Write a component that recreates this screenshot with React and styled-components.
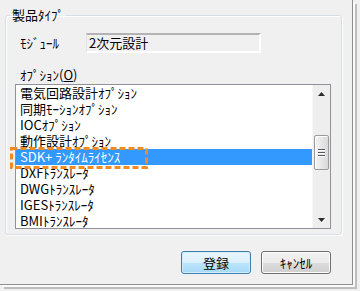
import React from 'react';
import styled, { createGlobalStyle } from 'styled-components';

const GlobalStyle = createGlobalStyle`
  html, body {
    margin: 0;
    padding: 0;
    background: #f0f0f0;
  }
  body {
    font-family: "Noto Sans CJK JP", "Liberation Sans", sans-serif;
    font-size: 13px;
    color: #000000;
  }
`;

const Window = styled.div`
  width: 360px;
  height: 291px;
  background: #f0f0f0;
  overflow: hidden;
  position: relative;
`;

const Client = styled.div`
  width: 353px;
  height: 285px;
  box-sizing: border-box;
  border-right: 1px solid #8f8f8f;
  border-bottom: 1px solid #8f8f8f;
  box-shadow: 2px 2px 0 #fafafa, 4px 4px 0 #bdbdbd;
  padding-top: 7px;
  display: flex;
  flex-direction: column;
`;

const GroupBox = styled.fieldset`
  margin: 0 0 0 5px;
  padding: 0;
  width: 337px;
  height: 228px;
  box-sizing: border-box;
  border: 1px solid #d5dfe5;
  border-radius: 3px;
  box-shadow: inset 1px 1px 0 #ffffff, 1px 1px 0 #ffffff;
  min-width: 0;
`;

const Legend = styled.legend`
  margin-left: 4px;
  padding: 0 2px;
  line-height: 16px;
  font-size: 13px;
`;

const GroupBody = styled.div`
  display: flex;
  flex-direction: column;
  padding: 10px 12px 0 9px;
`;

const FieldRow = styled.div`
  display: flex;
  align-items: center;
  height: 20px;
`;

const Label = styled.div`
  width: ${(p) => p.width || 'auto'};
  margin-left: 5px;
  line-height: 16px;
  margin-top: ${(p) => p.mt || '0'};
  margin-bottom: ${(p) => p.mb || '0'};
`;

const Underline = styled.span`
  text-decoration: underline;
`;

const ReadOnlyBox = styled.div`
  width: 175px;
  height: 20px;
  box-sizing: border-box;
  border-top: 2px solid #b3b3b3;
  border-left: 1px solid #e3e3e3;
  border-right: 2px solid #ffffff;
  border-bottom: 2px solid #ffffff;
  padding-left: 2px;
  line-height: 16px;
  background: #f0f0f0;
`;

const ListBox = styled.div`
  width: 316px;
  height: 145px;
  box-sizing: border-box;
  border: 1px solid #8f9399;
  background: #ffffff;
  display: flex;
  position: relative;
`;

const Items = styled.div`
  flex: 1;
  overflow: hidden;
  display: flex;
  flex-direction: column;
`;

const Item = styled.div`
  height: 16px;
  flex: none;
  line-height: 16px;
  padding-left: 4px;
  white-space: nowrap;
  background: ${(p) => (p.selected ? '#3399ff' : 'transparent')};
  color: ${(p) => (p.selected ? '#ffffff' : '#000000')};
`;

const ScrollBar = styled.div`
  width: 17px;
  flex: none;
  background: #eeeeee;
  border-left: 1px solid #f8f8f8;
  display: flex;
  flex-direction: column;
`;

const ArrowButton = styled.div`
  height: 17px;
  flex: none;
  display: flex;
  align-items: center;
  justify-content: center;
`;

const Track = styled.div`
  flex: 1;
  display: flex;
  flex-direction: column;
`;

const Thumb = styled.div`
  margin-top: ${(p) => p.offset}px;
  height: 35px;
  margin-left: 1px;
  width: 15px;
  box-sizing: border-box;
  border: 1px solid #9b9b9b;
  border-radius: 2px;
  background: linear-gradient(to right, #f4f4f4, #e6e6e6 55%, #d9d9d9);
  box-shadow: inset 1px 1px 0 #ffffff;
  display: flex;
  flex-direction: column;
  align-items: center;
  justify-content: center;
  gap: 2px;
`;

const Grip = styled.div`
  width: 7px;
  height: 1px;
  background: #555a60;
  box-shadow: 0 1px 0 #ffffff;
`;

const Highlight = styled.svg`
  position: absolute;
  left: 10px;
  top: 147px;
  pointer-events: none;
`;

const ButtonRow = styled.div`
  display: flex;
  justify-content: flex-end;
  gap: 10px;
  padding-right: 21px;
  margin-top: 16px;
`;

const Button = styled.button`
  width: 70px;
  height: 23px;
  box-sizing: border-box;
  border-radius: 3px;
  font-family: "Noto Sans CJK JP", "Liberation Sans", sans-serif;
  font-size: 13px;
  color: #000000;
  padding: 0;
  border: 1px solid ${(p) => (p.primary ? '#3c7fb1' : '#707070')};
  background: ${(p) =>
    p.primary
      ? 'linear-gradient(#eaf6fd 0%, #d9f0fc 50%, #bee6fd 51%, #a7d9f5 100%)'
      : 'linear-gradient(#f2f2f2 0%, #ebebeb 50%, #dddddd 51%, #cfcfcf 100%)'};
  box-shadow: inset 0 0 0 1px ${(p) => (p.primary ? '#d2ecf9' : '#fcfcfc')};
`;

const options = [
  '電気回路設計ｵﾌﾟｼｮﾝ',
  '同期ﾓｰｼｮﾝｵﾌﾟｼｮﾝ',
  'IOCｵﾌﾟｼｮﾝ',
  '動作設計ｵﾌﾟｼｮﾝ',
  'SDK+ ﾗﾝﾀｲﾑﾗｲｾﾝｽ',
  'DXFﾄﾗﾝｽﾚｰﾀ',
  'DWGﾄﾗﾝｽﾚｰﾀ',
  'IGESﾄﾗﾝｽﾚｰﾀ',
  'BMIﾄﾗﾝｽﾚｰﾀ',
];

const App = () => {
  const selected = 4;
  return (
    <>
      <GlobalStyle />
      <Window>
        <Client>
          <GroupBox>
            <Legend>製品ﾀｲﾌﾟ</Legend>
            <GroupBody>
              <FieldRow>
                <Label width="66px">ﾓｼﾞｭｰﾙ</Label>
                <ReadOnlyBox>2次元設計</ReadOnlyBox>
              </FieldRow>
              <Label mt="14px" mb="1px">
                ｵﾌﾟｼｮﾝ(<Underline>O</Underline>)
              </Label>
              <ListBox>
                <Items>
                  {options.map((o, i) => (
                    <Item key={o} selected={i === selected}>
                      {o}
                    </Item>
                  ))}
                </Items>
                <ScrollBar>
                  <ArrowButton>
                    <svg width="7" height="4" viewBox="0 0 7 4">
                      <path d="M0 4 L3.5 0 L7 4 Z" fill="#2b2b2b" />
                    </svg>
                  </ArrowButton>
                  <Track>
                    <Thumb offset={33}>
                      <Grip />
                      <Grip />
                      <Grip />
                    </Thumb>
                  </Track>
                  <ArrowButton>
                    <svg width="7" height="4" viewBox="0 0 7 4">
                      <path d="M0 0 L3.5 4 L7 0 Z" fill="#2b2b2b" />
                    </svg>
                  </ArrowButton>
                </ScrollBar>
              </ListBox>
            </GroupBody>
          </GroupBox>
          <ButtonRow>
            <Button primary>登録</Button>
            <Button>ｷｬﾝｾﾙ</Button>
          </ButtonRow>
        </Client>
        <Highlight width="138" height="22" viewBox="0 0 138 22">
          <rect
            x="1.5"
            y="1.5"
            width="135"
            height="19"
            fill="none"
            stroke="#f28a22"
            strokeWidth="3"
            strokeDasharray="6 3"
          />
        </Highlight>
      </Window>
    </>
  );
};

export default App;
